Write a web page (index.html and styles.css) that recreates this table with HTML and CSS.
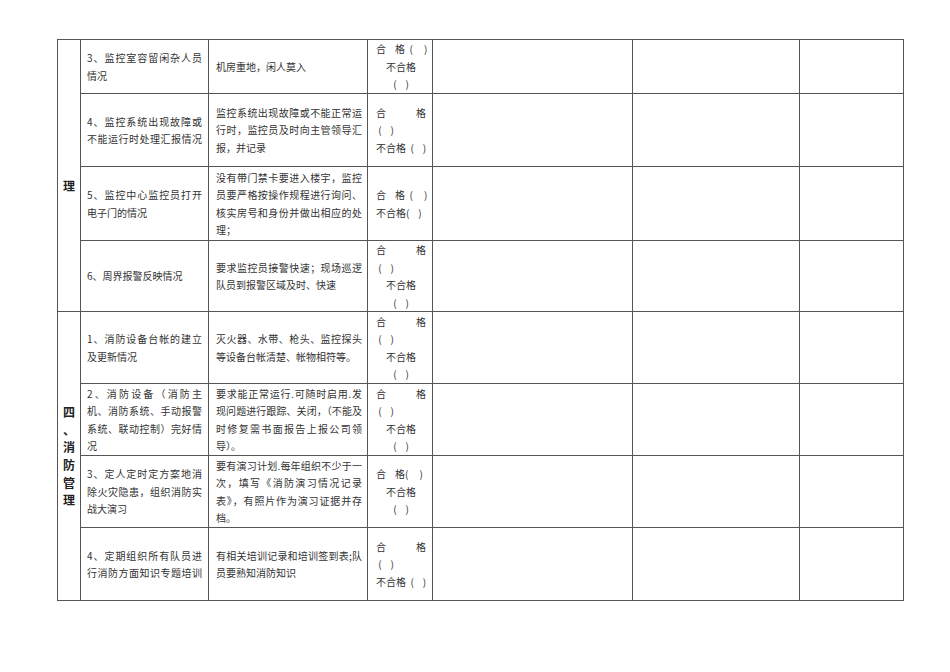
FILE: index.html
```html
<!DOCTYPE html>
<html lang="zh-CN">
<head>
<meta charset="utf-8">
<title>检查表</title>
<link rel="stylesheet" href="styles.css">
</head>
<body>
<table class="sheet">
  <colgroup>
    <col class="c1"><col class="c2"><col class="c3"><col class="c4"><col class="c5"><col class="c6"><col class="c7">
  </colgroup>
  <tbody>
    <tr class="r1">
      <td class="grp" rowspan="4"><span class="grp-t g1">理</span></td>
      <td class="item"><span class="ln j">3、监控室容留闲杂人员</span><span class="ln">情况</span></td>
      <td class="std"><span class="ln">机房重地，闲人莫入</span></td>
      <td class="res"><span class="ln">合    格  (     )</span><span class="ln c">不合格</span><span class="ln c">(    )</span></td>
      <td></td><td></td><td></td>
    </tr>
    <tr class="r2">
      <td class="item"><span class="ln j">4、监控系统出现故障或</span><span class="ln j">不能运行时处理汇报情况</span></td>
      <td class="std"><span class="ln j">监控系统出现故障或不能正常运</span><span class="ln j">行时，监控员及时向主管领导汇</span><span class="ln">报，并记录</span></td>
      <td class="res"><span class="ln j">合 格</span><span class="ln"> (    )</span><span class="ln">不合格  (    )</span></td>
      <td></td><td></td><td></td>
    </tr>
    <tr class="r3">
      <td class="item"><span class="ln j">5、监控中心监控员打开</span><span class="ln">电子门的情况</span></td>
      <td class="std"><span class="ln j">没有带门禁卡要进入楼宇，监控</span><span class="ln j">员要严格按操作规程进行询问、</span><span class="ln j">核实房号和身份并做出相应的处</span><span class="ln">理；</span></td>
      <td class="res"><span class="ln">合    格  (     )</span><span class="ln">不合格(    )</span></td>
      <td></td><td></td><td></td>
    </tr>
    <tr class="r4">
      <td class="item"><span class="ln">6、周界报警反映情况</span></td>
      <td class="std"><span class="ln j">要求监控员接警快速；现场巡逻</span><span class="ln">队员到报警区域及时、快速</span></td>
      <td class="res"><span class="ln j">合 格</span><span class="ln"> (    )</span><span class="ln c">不合格</span><span class="ln c">(    )</span></td>
      <td></td><td></td><td></td>
    </tr>
    <tr class="r5">
      <td class="grp" rowspan="4"><span class="grp-t">四<br>、<br>消<br>防<br>管<br>理</span></td>
      <td class="item"><span class="ln j">1、消防设备台帐的建立</span><span class="ln">及更新情况</span></td>
      <td class="std"><span class="ln j">灭火器、水带、枪头、监控探头</span><span class="ln">等设备台帐清楚、帐物相符等。</span></td>
      <td class="res"><span class="ln j">合 格</span><span class="ln"> (    )</span><span class="ln c">不合格</span><span class="ln c">(    )</span></td>
      <td></td><td></td><td></td>
    </tr>
    <tr class="r6">
      <td class="item"><span class="ln j">2、消防设备（消防主</span><span class="ln j">机、消防系统、手动报警</span><span class="ln j">系统、联动控制）完好情</span><span class="ln">况</span></td>
      <td class="std"><span class="ln j">要求能正常运行.可随时启用.发</span><span class="ln j">现问题进行跟踪、关闭，（不能及</span><span class="ln j">时修复需书面报告上报公司领</span><span class="ln">导）。</span></td>
      <td class="res"><span class="ln j">合 格</span><span class="ln"> (    )</span><span class="ln c">不合格</span><span class="ln c">(    )</span></td>
      <td></td><td></td><td></td>
    </tr>
    <tr class="r7">
      <td class="item"><span class="ln j">3、定人定时定方案地消</span><span class="ln j">除火灾隐患，组织消防实</span><span class="ln">战大演习</span></td>
      <td class="std"><span class="ln j">要有演习计划.每年组织不少于一</span><span class="ln j">次，填写《消防演习情况记录</span><span class="ln j">表》，有照片作为演习证据并存</span><span class="ln">档。</span></td>
      <td class="res"><span class="ln">合    格(     )</span><span class="ln c">不合格</span><span class="ln c">(    )</span></td>
      <td></td><td></td><td></td>
    </tr>
    <tr class="r8">
      <td class="item"><span class="ln j">4、定期组织所有队员进</span><span class="ln j">行消防方面知识专题培训</span></td>
      <td class="std"><span class="ln j">有相关培训记录和培训签到表;队</span><span class="ln">员要熟知消防知识</span></td>
      <td class="res"><span class="ln j">合 格</span><span class="ln"> (    )</span><span class="ln">不合格  (    )</span></td>
      <td></td><td></td><td></td>
    </tr>
  </tbody>
</table>
</body>
</html>
```

FILE: styles.css
```css
html, body {
  margin: 0;
  padding: 0;
  background: #ffffff;
}

body {
  font-family: "Noto Sans CJK SC", "Liberation Sans", sans-serif;
  color: #333333;
}

.sheet {
  margin: 39px 0 0 57px;
  width: 846px;
  table-layout: fixed;
  border-collapse: collapse;
  border: 1px solid #666666;
}

.c1 { width: 23px; }
.c2 { width: 128px; }
.c3 { width: 159px; }
.c4 { width: 65px; }
.c5 { width: 200px; }
.c6 { width: 167px; }
.c7 { width: 104px; }

.sheet td {
  border: 1px solid #555555;
  padding: 0;
  vertical-align: middle;
  font-size: 10px;
  line-height: 17.5px;
}

.r1 td { height: 53px; }
.r2 td { height: 72px; }
.r3 td { height: 73px; }
.r4 td { height: 70px; }
.r5 td { height: 71px; }
.r6 td { height: 71px; }
.r7 td { height: 71px; }
.r8 td { height: 72px; }

.sheet td.grp {
  text-align: center;
  vertical-align: middle;
}

.grp-t {
  display: block;
  font-size: 12px;
  line-height: 17.7px;
  font-weight: 700;
  color: #222222;
}

.g1 {
  padding-top: 20px;
}

.item {
  padding: 0 6px 0 6px !important;
}

.std {
  padding: 0 5px 0 7px !important;
}

.res {
  padding: 0 6px 0 8px !important;
}

.ln {
  display: block;
  text-align: left;
  white-space: pre;
}

.ln.j {
  text-align: justify;
  text-align-last: justify;
  white-space: normal;
}

.ln.c {
  text-align: center;
}
```
